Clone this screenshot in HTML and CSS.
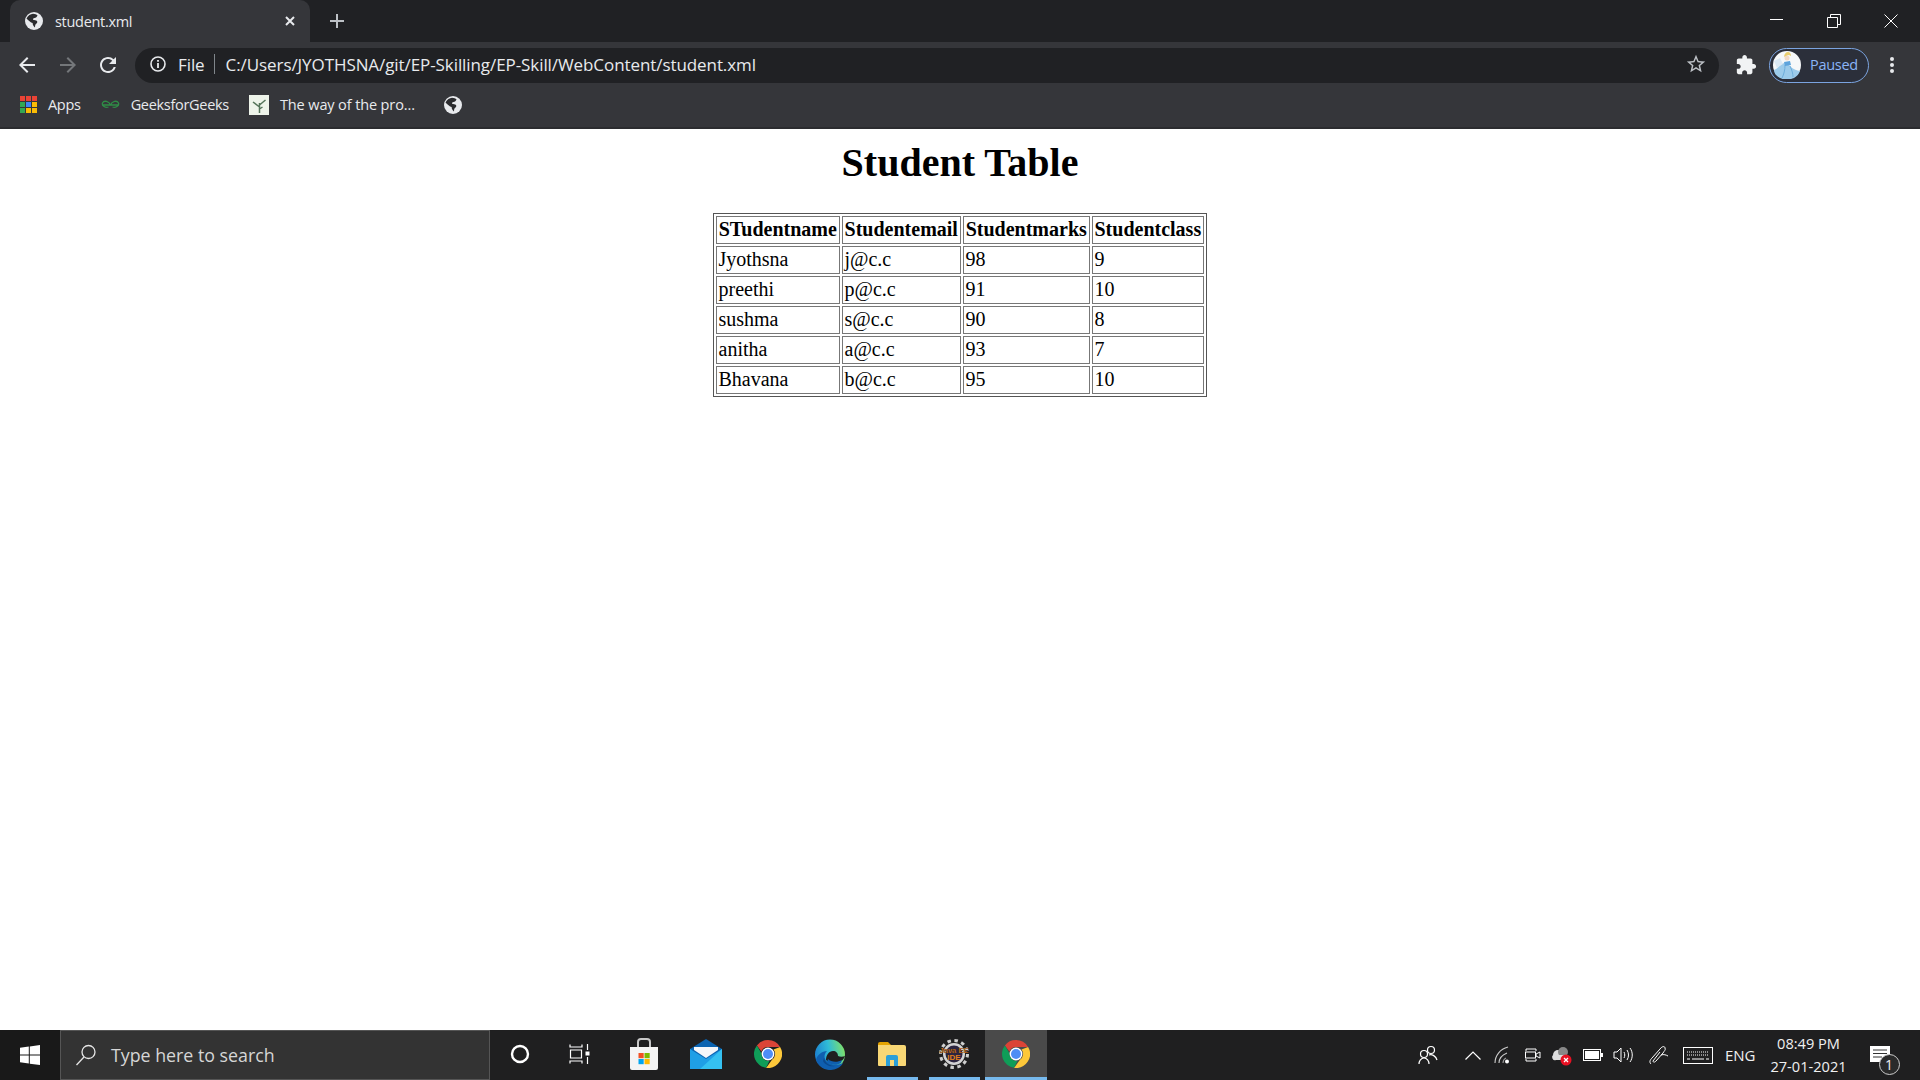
FILE: index.html
```html
<!DOCTYPE html>
<html lang="en">
<head>
    <meta charset="UTF-8">
    <title>student.xml</title>
    <link rel="stylesheet" href="styles.css">
</head>
<body>
    <svg class="defs" width="0" height="0">
        <defs>
            <linearGradient id="edgeTop" x1="0" y1="0.6" x2="1" y2="0.4">
                <stop offset="0" stop-color="#1b7fd0"/>
                <stop offset="0.5" stop-color="#30bcd6"/>
                <stop offset="1" stop-color="#7ee06a"/>
            </linearGradient>
        </defs>
        <symbol id="globe" viewBox="0 0 18 18">
            <circle cx="9" cy="9" r="9" fill="#e8eaed"/>
            <path fill="#2a2b2e" d="M1.500 6.500C3 3.500 5.500 2 8 1.800c2 .2 3.500.7 4.500 1.500-.3 1.700-1.700 2.500-3 2.700-1.300.2-1.800 1-1.400 1.700 1.200.5 2.900.5 3.900 1.300.5 1 .3 2-.5 2.600-1 .5-1.500 1.500-1.500 3.800-2-1.500-2.500-3-2.300-4.300C5.500 10.500 3.500 8.500 1.500 6.500z"/>
        </symbol>
        <symbol id="chrome" viewBox="0 0 28 28">
            <path fill="#db4437" d="M14 0a14 14 0 0 1 12.100 7H14a7 7 0 0 0-6.600 4.600L2.900 5.400A14 14 0 0 1 14 0z"/>
            <path fill="#0f9d58" d="M2.900 5.400l4.600 8a6.900 6.900 0 0 0 8 7.400l-3.400 7A14 14 0 0 1 2.900 5.400z"/>
            <path fill="#fdc83a" d="M26.100 7A14 14 0 0 1 12.100 27.900l5.900-8.200A7 7 0 0 0 19.500 9.500L26.100 7z"/>
            <circle cx="14" cy="14" r="6.400" fill="#fff"/>
            <circle cx="14" cy="14" r="5" fill="#4e8df5"/>
        </symbol>
    </svg>

    <!-- browser window top -->
    <div class="titlebar">
        <div class="tab">
            <svg class="tab-icon" width="18" height="18"><use href="#globe"/></svg>
            <span class="tab-title">student.xml</span>
            <svg class="tab-close" width="12" height="12" viewBox="0 0 12 12"><path d="M2 2l8 8M10 2l-8 8" stroke="#e8eaed" stroke-width="2"/></svg>
        </div>
        <svg class="new-tab" width="16" height="16" viewBox="0 0 16 16"><path d="M8 1v14M1 8h14" stroke="#bdc1c6" stroke-width="2"/></svg>
        <div class="window-controls">
            <svg width="14" height="14" viewBox="0 0 14 14"><path d="M0 5.500h13" stroke="#fff"/></svg>
            <svg width="14" height="14" viewBox="0 0 14 14"><path d="M.5 3.500h10v10H.5zM3.500 3.500v-3h10v10h-3" fill="none" stroke="#fff"/></svg>
            <svg width="14" height="14" viewBox="0 0 14 14"><path d="M.5.500l13 13M13.500.500l-13 13" stroke="#fff"/></svg>
        </div>
    </div>

    <div class="toolbar">
        <svg class="nav-icon" width="24" height="24" viewBox="0 0 24 24"><path fill="#e8eaed" d="M20 11H7.830l5.590-5.590L12 4l-8 8 8 8 1.410-1.410L7.830 13H20v-2z"/></svg>
        <svg class="nav-icon" width="24" height="24" viewBox="0 0 24 24"><path fill="#74777a" d="M4 11h12.170l-5.590-5.590L12 4l8 8-8 8-1.410-1.410L16.170 13H4v-2z"/></svg>
        <svg class="nav-icon" width="24" height="24" viewBox="0 0 24 24"><path fill="#e8eaed" d="M17.650 6.350A7.958 7.958 0 0 0 12 4c-4.420 0-7.990 3.580-7.990 8s3.570 8 7.990 8c3.730 0 6.840-2.550 7.730-6h-2.080A5.990 5.990 0 0 1 12 18c-3.310 0-6-2.690-6-6s2.690-6 6-6c1.660 0 3.140.690 4.220 1.780L13 11h7V4l-2.350 2.350z"/></svg>
        <div class="omnibox">
            <svg width="18" height="18" viewBox="0 0 18 18"><circle cx="9" cy="9" r="7" fill="none" stroke="#e8eaed" stroke-width="1.600"/><path d="M8.100 8h1.800v5H8.100zM8.100 5h1.800v1.800H8.100z" fill="#e8eaed"/></svg>
            <span class="scheme">File</span>
            <span class="omni-sep"></span>
            <span class="url">C:/Users/JYOTHSNA/git/EP-Skilling/EP-Skill/WebContent/student.xml</span>
            <svg class="star" width="22" height="22" viewBox="0 0 24 24"><path fill="#bdc1c6" d="M22 9.240l-7.190-.620L12 2 9.190 8.630 2 9.240l5.460 4.730L5.820 21 12 17.270 18.180 21l-1.630-7.030L22 9.240zM12 15.400l-3.760 2.270 1-4.280-3.320-2.880 4.380-.380L12 6.100l1.710 4.040 4.380.380-3.320 2.880 1 4.280L12 15.400z"/></svg>
        </div>
        <svg class="puzzle" width="22" height="22" viewBox="0 0 24 24"><path fill="#f1f3f4" d="M20.500 11H19V7c0-1.100-.9-2-2-2h-4V3.500C13 2.120 11.880 1 10.500 1S8 2.120 8 3.500V5H4c-1.100 0-1.990.9-1.990 2v3.800H3.500c1.490 0 2.700 1.210 2.700 2.700s-1.210 2.700-2.700 2.700H2V20c0 1.100.9 2 2 2h3.800v-1.500c0-1.490 1.210-2.700 2.700-2.700 1.490 0 2.700 1.210 2.700 2.700V22H17c1.100 0 2-.9 2-2v-4h1.500c1.380 0 2.500-1.120 2.500-2.500S21.880 11 20.500 11z"/></svg>
        <div class="profile">
            <svg width="28" height="28" viewBox="0 0 28 28">
                <circle cx="14" cy="14" r="14" fill="#f6f8f9"/>
                <path d="M7 27C3 25 1 22 1 19c3-1 5-3 6-6l5-1 3 0c1 3 5 7 12 8-1 3-3 5-6 7-5 2-10 2-14 0z" fill="#9ccbea"/>
                <path d="M12 14c0 5-1 9-3 13M17 15c2 4 3 8 3 11" fill="none" stroke="#6eaedb"/>
                <path d="M1 10l6-3 3 6-6 4z" fill="#dbe9f4"/>
                <circle cx="14" cy="7" r="2.500" fill="#f2d9c4"/>
                <path d="M11 6c0-3 2-5 4-5s3 2 3 4l-2-1c-2 0-3 1-5 2z" fill="#e9cd6d"/>
                <path d="M11 11l6-1 1 4-6 1z" fill="#5ea4dc"/>
            </svg>
            <span class="profile-name">Paused</span>
        </div>
        <svg class="kebab" width="6" height="18" viewBox="0 0 6 18"><circle cx="3" cy="3" r="2" fill="#e8eaed"/><circle cx="3" cy="9" r="2" fill="#e8eaed"/><circle cx="3" cy="15" r="2" fill="#e8eaed"/></svg>
    </div>

    <div class="bookmarks">
        <div class="bookmark">
            <svg width="17" height="17" viewBox="0 0 17 17">
                <path fill="#ea4335" d="M0 0h5v5H0zM6 0h5v5H6zM12 0h5v5h-5z"/>
                <path fill="#34a853" d="M0 6h5v5H0z"/>
                <path fill="#4285f4" d="M6 6h5v5H6z"/>
                <path fill="#fbbc05" d="M12 6h5v5h-5zM6 12h5v5H6zM12 12h5v5h-5z"/>
                <path fill="#34a853" d="M0 12h5v5H0z"/>
            </svg>
            <span>Apps</span>
        </div>
        <div class="bookmark">
            <svg width="19" height="10" viewBox="0 0 19 10"><path d="M1 5h17M9.500 5C8 1 3 0 1.500 3c-1 3 3 5 6 4M9.500 5c1.500-4 6.500-5 8-2 1 3-3 5-6 4" fill="none" stroke="#2f8d46" stroke-width="1.300"/></svg>
            <span>GeeksforGeeks</span>
        </div>
        <div class="bookmark bookmark-wide">
            <svg width="20" height="20" viewBox="0 0 20 20">
                <rect width="20" height="20" fill="#eef4ea"/>
                <path d="M10.500 18V8M10.500 12L4 7M10.500 10l6-5M10.500 14l3-2" fill="none" stroke="#55755a" stroke-width="1.500"/>
            </svg>
            <span>The way of the pro...</span>
        </div>
        <svg class="bookmark-globe" width="18" height="18"><use href="#globe"/></svg>
    </div>

    <!-- page content -->
    <main class="page">
        <h1>Student Table</h1>
        <table class="student-table">
            <tr><th class="col-name">STudentname</th><th class="col-email">Studentemail</th><th class="col-marks">Studentmarks</th><th class="col-class">Studentclass</th></tr>
            <tr><td>Jyothsna</td><td>j@c.c</td><td>98</td><td>9</td></tr>
            <tr><td>preethi</td><td>p@c.c</td><td>91</td><td>10</td></tr>
            <tr><td>sushma</td><td>s@c.c</td><td>90</td><td>8</td></tr>
            <tr><td>anitha</td><td>a@c.c</td><td>93</td><td>7</td></tr>
            <tr><td>Bhavana</td><td>b@c.c</td><td>95</td><td>10</td></tr>
        </table>
    </main>

    <!-- windows taskbar -->
    <div class="taskbar">
        <div class="start">
            <svg width="20" height="20" viewBox="0 0 20 20"><path fill="#fff" d="M0 2.800l8.800-1.200v8H0zM9.800 1.400L20 0v9.600H9.800zM0 10.600h8.800v8L0 17.300zM9.800 10.600H20V20L9.800 18.700z"/></svg>
        </div>
        <div class="search">
            <svg width="22" height="24" viewBox="0 0 22 24"><circle cx="13.500" cy="9" r="6.500" fill="none" stroke="#e6e6e6" stroke-width="1.300"/><path d="M9 14l-7.500 8" stroke="#e6e6e6" stroke-width="1.300"/></svg>
            <span>Type here to search</span>
        </div>
        <div class="task-item task-cortana">
            <svg width="20" height="20" viewBox="0 0 20 20"><circle cx="10" cy="10" r="8" fill="none" stroke="#fff" stroke-width="2.400"/></svg>
        </div>
        <div class="task-item task-view">
            <svg width="22" height="20" viewBox="0 0 22 20"><path d="M1 .5v2.500h12V.5M1.500 6h11v8h-11zM1 19.500V17h12v2.500M18.500 0v6M18.500 13v7" fill="none" stroke="#fff" stroke-width="1.200"/><rect x="16.500" y="7.500" width="4" height="4" fill="#fff"/></svg>
        </div>
        <div class="task-item">
            <svg width="30" height="32" viewBox="0 0 30 32">
                <path d="M9 9V4a3 3 0 0 1 3-3h6a3 3 0 0 1 3 3v5" fill="none" stroke="#c8c8c8" stroke-width="2"/>
                <path d="M1 9h28v21a2 2 0 0 1-2 2H3a2 2 0 0 1-2-2z" fill="#f4f4f4"/>
                <path fill="#f25022" d="M9.500 15h5.200v5.200H9.500z"/><path fill="#7fba00" d="M15.500 15h5.200v5.200h-5.200z"/>
                <path fill="#00a4ef" d="M9.500 21h5.200v5.200H9.500z"/><path fill="#ffb900" d="M15.500 21h5.200v5.200h-5.200z"/>
            </svg>
        </div>
        <div class="task-item">
            <svg width="32" height="30" viewBox="0 0 32 30">
                <path d="M0 10L16 0l16 10v20H0z" fill="#0a63b1"/>
                <path d="M0 10l16 10 16-10v20H0z" fill="#1f9fe6"/>
                <path d="M32 10v20H10z" fill="#35c1f1"/>
                <path d="M4 8h24v3l-12 8-12-8z" fill="#f3f6fa"/>
            </svg>
        </div>
        <div class="task-item">
            <svg width="28" height="28"><use href="#chrome"/></svg>
        </div>
        <div class="task-item">
            <svg width="30" height="31" viewBox="0 0 30 31">
                <circle cx="15" cy="15.500" r="15" fill="url(#edgeTop)"/>
                <path d="M1 21c2 6 8 10 14 10 6 0 11-3 13-7-4 2-10 2-14 0-5-3-6-8-2-12-5 0-10 4-11 9z" fill="#0f5fb0"/>
                <path d="M11 21c3 3 9 4 14 2 2-1 4-3 5-6-2 1-5 1-7 0 0-3-2-5-5-5-4 0-7 4-7 9z" fill="#1f1f20"/>
                <path d="M9 19c1 5 6 8 11 8-5 1-10-1-12-5z" fill="#0b4a8f"/>
                <path d="M13 20c3 3 9 4 14 1l-1 3c-5 3-10 2-14-1z" fill="#0f5fb0"/>
            </svg>
        </div>
        <div class="task-item task-open">
            <svg width="28" height="25" viewBox="0 0 28 25">
                <path d="M0 2a2 2 0 0 1 2-2h8l3 3h-13z" fill="#e5a400"/>
                <path d="M0 3h26a2 2 0 0 1 2 2v18a1 1 0 0 1-1 1H1a1 1 0 0 1-1-1z" fill="#f8d775"/>
                <path d="M8 24v-9a2 2 0 0 1 2-2h8a2 2 0 0 1 2 2v9h-4v-6h-4v6z" fill="#2a9fd8"/>
            </svg>
        </div>
        <div class="task-item task-open">
            <svg width="30" height="30" viewBox="0 0 30 30">
                <circle cx="15" cy="15" r="13.500" fill="none" stroke="#cfcfcf" stroke-width="3" stroke-dasharray="3.500 3.570"/>
                <circle cx="15" cy="15" r="11" fill="#d4d4d4"/>
                <circle cx="15" cy="15" r="8.500" fill="#2c2540"/>
                <text class="eclipse-top" x="15" y="13.500" text-anchor="middle">Java EE</text>
                <text class="eclipse-bottom" x="15" y="21" text-anchor="middle">IDE</text>
            </svg>
        </div>
        <div class="task-item task-open task-active">
            <svg width="28" height="28"><use href="#chrome"/></svg>
        </div>

        <div class="tray">
            <svg class="tray-people" width="20" height="20" viewBox="0 0 20 20"><circle cx="13" cy="5" r="3.500" fill="none" stroke="#fff" stroke-width="1.200"/><circle cx="6" cy="9" r="3.500" fill="none" stroke="#fff" stroke-width="1.200"/><path d="M1 19c0-3 2-6 5-6s5 3 5 6M11 10c3-1 7 1 8 5" fill="none" stroke="#fff" stroke-width="1.200"/></svg>
            <svg class="tray-chevron" width="16" height="9" viewBox="0 0 16 9"><path d="M.5 8.500L8 1l7.500 7.500" fill="none" stroke="#fff" stroke-width="1.200"/></svg>
            <svg class="tray-wifi" width="16" height="18" viewBox="0 0 16 18"><path d="M1 17C1 10 6 3 14 1M5 17c0-4 3-8 8-10" fill="none" stroke="#ccc" stroke-width="1.100"/><path d="M9 17c0-2 1-4 3-5" fill="none" stroke="#999" stroke-width="1.100"/><circle cx="13" cy="15.500" r="2" fill="#fff"/></svg>
            <svg class="tray-video" width="16" height="18" viewBox="0 0 16 18"><path d="M1 5V3h10v2M1 13v2h10v-2" fill="none" stroke="#fff"/><rect x=".5" y="6" width="10" height="6" fill="none" stroke="#fff"/><path d="M11 8l4-2v6l-4-2z" fill="none" stroke="#fff"/></svg>
            <svg class="tray-cloud" width="22" height="22" viewBox="0 0 22 22"><circle cx="8" cy="11" r="5" fill="#ddd"/><circle cx="13" cy="8" r="5" fill="#888"/><path d="M3 11h13v5H6a3 3 0 0 1-3-5z" fill="#ddd"/><circle cx="16" cy="16" r="5.500" fill="#e81123"/><path d="M14 14l4 4M18 14l-4 4" stroke="#fff" stroke-width="1.300"/></svg>
            <svg class="tray-battery" width="20" height="12" viewBox="0 0 20 12"><rect x=".5" y=".5" width="17" height="11" fill="none" stroke="#fff"/><rect x="2" y="2" width="14" height="8" fill="#fff"/><path d="M18 4h2v4h-2z" fill="#fff"/></svg>
            <svg class="tray-volume" width="20" height="16" viewBox="0 0 20 16"><path d="M1 5h3l4-4v14l-4-4H1z" fill="none" stroke="#fff"/><path d="M11 5c1 2 1 4 0 6M14 3c2 3 2 7 0 10M17 1c3 4 3 10 0 14" fill="none" stroke="#fff"/></svg>
            <svg class="tray-pen" width="20" height="21" viewBox="0 0 20 21"><path d="M2 19c-2-2-1-4 1-6l8-9c2-3 5-3 5-1 1 2-1 3-2 5l-7 8c-2 2-3 1-3 0l7-9M12 10c3-1 5 0 7 1" fill="none" stroke="#fff"/></svg>
            <svg class="tray-keyboard" width="30" height="17" viewBox="0 0 30 17"><rect x=".5" y=".5" width="29" height="16" fill="none" stroke="#fff"/><path d="M4 5h22M4 8h22" stroke="#fff" stroke-dasharray="1 1"/><path d="M4 12h3M9 12h12M23 12h3" stroke="#fff"/></svg>
            <span class="tray-lang">ENG</span>
            <div class="clock"><span>08:49 PM</span><span>27-01-2021</span></div>
            <div class="notify">
                <svg width="21" height="18" viewBox="0 0 21 18"><path d="M0 0h20v16H0z" fill="#fff"/><path d="M3 4h14M3 7.500h14M3 11h9" stroke="#333"/></svg>
                <span class="notify-count">1</span>
            </div>
        </div>
    </div>
</body>
</html>
```

FILE: styles.css
```css
* {
    box-sizing: border-box;
}

html, body {
    height: 100%;
}

body {
    margin: 0;
    display: flex;
    flex-direction: column;
    overflow: hidden;
    background: white;
    font-family: "Open Sans", "Noto Sans", sans-serif;
}

svg {
    display: block;
    flex-shrink: 0;
}

.defs {
    position: absolute;
}

/* title bar */
.titlebar {
    height: 42px;
    padding-left: 10px;
    display: flex;
    align-items: center;
    background: #202124;
}

.tab {
    width: 300px;
    height: 42px;
    padding: 0 14px 0 15px;
    display: flex;
    align-items: center;
    background: #35363a;
    border-radius: 10px 10px 0 0;
    color: #e8eaed;
    font-size: 14.5px;
    letter-spacing: -0.3px;
}

.tab-title {
    margin-left: 12px;
    flex: 1;
}

.new-tab {
    margin-left: 19px;
}

.window-controls {
    margin-left: auto;
    padding-right: 22px;
    display: flex;
    gap: 43px;
}

/* toolbar */
.toolbar {
    height: 44px;
    padding: 2px 0 0 15px;
    display: flex;
    align-items: center;
    background: #35363a;
}

.nav-icon {
    margin-right: 16.5px;
}

.omnibox {
    width: 1584px;
    height: 35px;
    margin-left: -1.5px;
    padding: 0 12px 2px 14px;
    display: flex;
    align-items: center;
    background: #202124;
    border-radius: 18px;
    color: #e8eaed;
    font-size: 17px;
    letter-spacing: -0.08px;
}

.scheme {
    margin-left: 11px;
}

.omni-sep {
    width: 1px;
    height: 20px;
    margin: 0 11px 0 9px;
    background: #80868b;
}

.star {
    margin-left: auto;
}

.puzzle {
    margin-left: 16px;
}

.profile {
    width: 100px;
    height: 35px;
    margin-left: 12px;
    padding-left: 3px;
    display: flex;
    align-items: center;
    gap: 9px;
    background: #2b2f3a;
    border: 1px solid #7ba4e0;
    border-radius: 18px;
    color: #8ab4f8;
    font-size: 14.5px;
    letter-spacing: -0.3px;
}

.profile-name {
    margin-bottom: 2px;
}

.kebab {
    margin-left: 20px;
}

/* bookmarks bar */
.bookmarks {
    height: 43px;
    padding: 0 0 4px 20px;
    display: flex;
    align-items: center;
    gap: 20px;
    background: #35363a;
    border-bottom: 2px solid #2b2c2f;
    color: #e8eaed;
    font-size: 14.5px;
    letter-spacing: -0.3px;
}

.bookmark {
    display: flex;
    align-items: center;
    gap: 11px;
}

.bookmark-wide {
    letter-spacing: -0.12px;
}

.bookmark-globe {
    margin-left: 9px;
}

/* page */
.page {
    flex: 1;
}

h1 {
    margin: 11px 0 27px;
    font-family: "Liberation Serif", serif;
    font-size: 40px;
    line-height: 46px;
    font-weight: bold;
    text-align: center;
    color: black;
}

.student-table {
    margin: 0 auto;
    border: 1px solid #555;
    border-spacing: 2px;
    table-layout: fixed;
    width: 494px;
    font-family: "Liberation Serif", serif;
    font-size: 20px;
    color: black;
}

.student-table th,
.student-table td {
    height: 28px;
    padding: 0 2px 1px 1.5px;
    border: 1px solid #777;
    white-space: nowrap;
}

.student-table td {
    text-align: left;
}

.col-name { width: 124px; }
.col-email { width: 119px; }
.col-marks { width: 127px; }
.col-class { width: 112px; }

/* taskbar */
.taskbar {
    height: 50px;
    display: flex;
    align-items: center;
    background: #1f1f20;
    color: #fff;
}

.start {
    width: 60px;
    height: 50px;
    padding-left: 20px;
    display: flex;
    align-items: center;
    background: #191919;
}

.search {
    width: 430px;
    height: 50px;
    padding-left: 14px;
    display: flex;
    align-items: center;
    gap: 14px;
    background: #333;
    border: 1px solid #555;
    color: #d6d6d6;
    font-size: 17.8px;
}

.task-item {
    width: 62px;
    height: 50px;
    display: flex;
    align-items: center;
    justify-content: center;
    padding-bottom: 2px;
}

.task-cortana {
    width: 60px;
}

.task-view {
    width: 63px;
    padding-right: 3px;
}

.task-open {
    background: linear-gradient(#76b9ed, #76b9ed) center bottom / 51px 3px no-repeat;
}

.task-active {
    background: linear-gradient(#76b9ed, #76b9ed) center bottom / 100% 3px no-repeat, #4a4a4a;
}

.eclipse-top {
    font-family: "Liberation Sans", sans-serif;
    font-size: 7.5px;
    font-weight: bold;
    fill: #e07e1c;
    stroke: #111;
    stroke-width: 0.2px;
}

.eclipse-bottom {
    font-family: "Liberation Sans", sans-serif;
    font-size: 8px;
    font-weight: bold;
    fill: #e07e1c;
}

.tray {
    margin-left: auto;
    height: 50px;
    display: flex;
    align-items: center;
    color: #f0f0f0;
}

.tray-people { margin-right: 27px; }
.tray-chevron { margin-right: 13px; }
.tray-wifi { margin-right: 15px; }
.tray-video { margin-right: 9px; }
.tray-cloud { margin-right: 11px; }
.tray-battery { margin-right: 10px; }
.tray-volume { margin-right: 16px; }
.tray-pen { margin-right: 14px; }
.tray-keyboard { margin-right: 12px; }

.tray-lang {
    font-size: 15px;
}

.clock {
    width: 80px;
    margin-left: 13px;
    display: flex;
    flex-direction: column;
    align-items: center;
    gap: 6px;
    font-size: 14.6px;
    line-height: 17px;
}

.notify {
    position: relative;
    width: 36px;
    margin-left: 21px;
    margin-right: 14.5px;
}

.notify-count {
    position: absolute;
    left: 9px;
    top: 8px;
    width: 21px;
    height: 21px;
    border: 1px solid #ccc;
    border-radius: 50%;
    background: #2a2a2a;
    text-align: center;
    font-size: 14px;
    line-height: 19px;
}
```
